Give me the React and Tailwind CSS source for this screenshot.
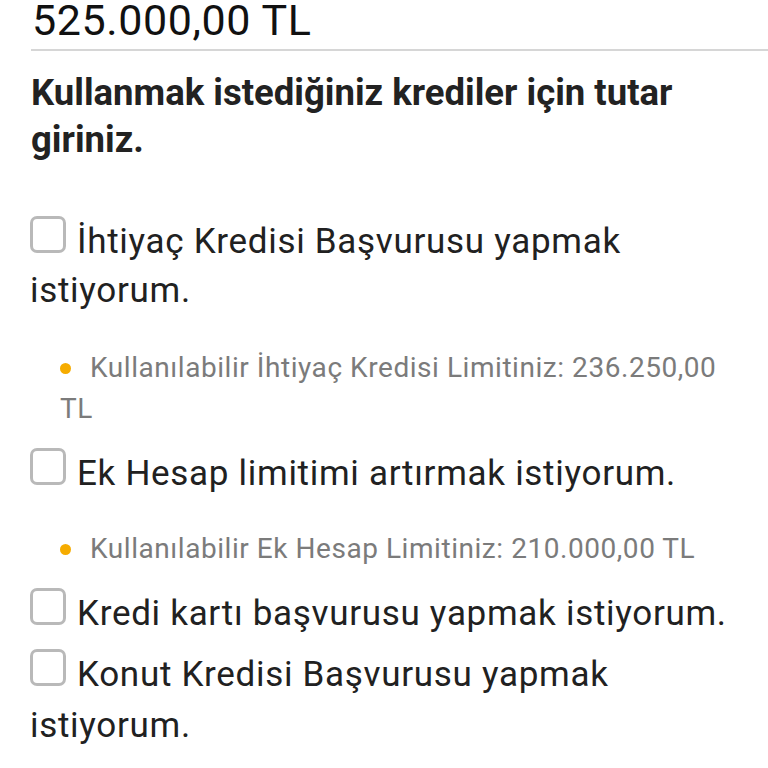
export default function App() {
  const Box = () => (
    <span className="inline-block w-[36px] h-[37px] border-[3px] border-[#b9b9b9] rounded-[7px] mr-[11px] bg-white"></span>
  );
  const Dot = () => (
    <span className="inline-block w-[11px] h-[11px] rounded-full bg-[#f6ac00] mr-[19px] align-[3px]"></span>
  );
  const body = "text-[35px] tracking-[0.7px] text-[#212121]";
  const note = "pl-[30px] text-[28px] leading-[41px] tracking-[0.55px] text-[#7b7b7b]";
  return (
    <div className="min-h-[768px] bg-white overflow-hidden" style={{ fontFamily: 'Roboto, "Noto Sans", sans-serif' }}>
      <div className="pl-[31px]">
        <div className="text-[43px] leading-[44px] -mt-[2px] tracking-[0.6px] text-[#111] pl-[1px]">525.000,00 TL</div>
        <div className="h-[2px] bg-[#d6d6d6] mt-[7px]"></div>
      </div>
      <div className="pl-[30px] pr-[20px]">
        <h2 className="mt-[18px] text-[36.5px] leading-[47px] font-bold text-[#222] pl-[1px]">
          Kullanmak istediğiniz krediler için tutar giriniz.
        </h2>
        <p className={`mt-[53px] leading-[49px] ${body}`}>
          <Box />İhtiyaç Kredisi Başvurusu yapmak istiyorum.
        </p>
        <div className={`mt-[32px] ${note}`}>
          <Dot />Kullanılabilir İhtiyaç Kredisi Limitiniz: 236.250,00 TL
        </div>
        <p className={`mt-[19px] leading-[49px] ${body}`}>
          <Box />Ek Hesap limitimi artırmak istiyorum.
        </p>
        <div className={`mt-[30px] ${note}`}>
          <Dot />Kullanılabilir Ek Hesap Limitiniz: 210.000,00 TL
        </div>
        <p className={`mt-[19px] leading-[49px] ${body}`}>
          <Box />Kredi kartı başvurusu yapmak istiyorum.
        </p>
        <p className={`mt-[11px] leading-[51px] ${body}`}>
          <Box />Konut Kredisi Başvurusu yapmak istiyorum.
        </p>
      </div>
    </div>
  );
}
